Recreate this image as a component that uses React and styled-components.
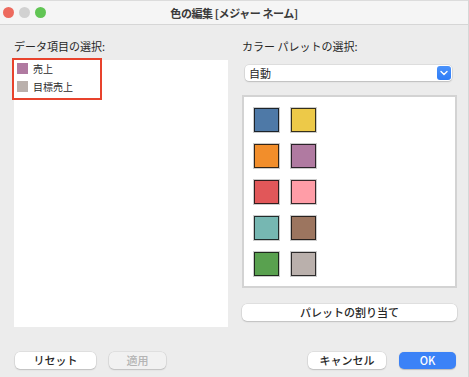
import React from 'react';
import styled, { createGlobalStyle } from 'styled-components';

const GlobalStyle = createGlobalStyle`
  html, body {
    margin: 0;
    padding: 0;
    background: #ececec;
  }
  body {
    font-family: "Noto Sans CJK JP", "Noto Sans", "Liberation Sans", sans-serif;
    color: #262626;
  }
`;

const palette = [
  '#4e79a7', '#edc948',
  '#f28e2b', '#b07aa1',
  '#e15759', '#ff9da7',
  '#76b7b2', '#9c755f',
  '#59a14f', '#bab0ac',
];

const items = [
  { name: '売上', color: '#b07aa1' },
  { name: '目標売上', color: '#bab0ac' },
];

export default function App() {
  return (
    <>
      <GlobalStyle />
      <Window>
        <TitleBar>
          <Lights>
            <Light color="#ed6a5e" />
            <Light color="#d1d1d1" />
            <Light color="#61c554" />
          </Lights>
          <Title>色の編集 [メジャー ネーム]</Title>
        </TitleBar>

        <Body>
          <Columns>
            <Column>
              <Label>データ項目の選択:</Label>
              <ListBox>
                <Highlight>
                  {items.map((it) => (
                    <Item key={it.name}>
                      <ItemSwatch color={it.color} />
                      <span>{it.name}</span>
                    </Item>
                  ))}
                </Highlight>
              </ListBox>
            </Column>

            <Column>
              <Label>カラー パレットの選択:</Label>
              <Select>
                <span>自動</span>
                <SelectArrow>
                  <svg width="8" height="6" viewBox="0 0 8 6">
                    <path d="M1 1.5 L4 4.5 L7 1.5" fill="none" stroke="#fff" strokeWidth="1.4" strokeLinecap="round" strokeLinejoin="round" />
                  </svg>
                </SelectArrow>
              </Select>
              <PaletteBox>
                <SwatchGrid>
                  {palette.map((c) => (
                    <Swatch key={c} color={c} />
                  ))}
                </SwatchGrid>
              </PaletteBox>
              <Button wide>パレットの割り当て</Button>
            </Column>
          </Columns>

          <Footer>
            <Group>
              <Button w={81}>リセット</Button>
              <Button w={57} disabled>適用</Button>
            </Group>
            <Group>
              <Button w={78}>キャンセル</Button>
              <Button w={57} primary>OK</Button>
            </Group>
          </Footer>
        </Body>
      </Window>
    </>
  );
}

const Window = styled.div`
  width: 469px;
  height: 377px;
  background: #ececec;
  display: flex;
  flex-direction: column;
  overflow: hidden;
  box-sizing: border-box;
  border-right: 1px solid #d6d6d6;
`;

const TitleBar = styled.div`
  position: relative;
  height: 25px;
  flex: none;
  display: flex;
  align-items: center;
  justify-content: center;
  background: #f5f5f5;
  border-top: 1px solid #dcdcdc;
  border-bottom: 1px solid #d6d6d6;
  box-sizing: border-box;
`;

const Lights = styled.div`
  position: absolute;
  left: 3px;
  top: 6px;
  display: flex;
  gap: 5px;
`;

const Light = styled.span`
  width: 11px;
  height: 11px;
  border-radius: 50%;
  background: ${(p) => p.color};
`;

const Title = styled.div`
  font-size: 11px;
  font-weight: 700;
  color: #3a3a3a;
  letter-spacing: -0.4px;
`;

const Body = styled.div`
  flex: 1;
  display: flex;
  flex-direction: column;
  padding: 14px 12px 0 14px;
`;

const Columns = styled.div`
  display: grid;
  grid-template-columns: 214px 215px;
  column-gap: 14px;
  height: 288px;
`;

const Column = styled.div`
  display: flex;
  flex-direction: column;
`;

const Label = styled.div`
  height: 14px;
  line-height: 14px;
  font-size: 11px;
  color: #262626;
`;

const ListBox = styled.div`
  margin-top: 7px;
  flex: 1;
  background: #fff;
`;

const Highlight = styled.div`
  width: 83px;
  height: 35px;
  margin: -2px 0 0 -2px;
  border: 2px solid #e8432d;
  padding: 3px 0 0 3px;
  display: flex;
  flex-direction: column;
  gap: 7px;
`;

const Item = styled.div`
  display: flex;
  align-items: center;
  gap: 5px;
  height: 11px;
  font-size: 10px;
  color: #2a2a2a;
`;

const ItemSwatch = styled.span`
  width: 11px;
  height: 11px;
  background: ${(p) => p.color};
`;

const Select = styled.div`
  margin: 12px 5px 0 3px;
  height: 16px;
  background: #fff;
  border-radius: 4px;
  box-shadow: 0 0 0 0.5px rgba(0, 0, 0, 0.12), 0 1px 1.5px rgba(0, 0, 0, 0.15);
  display: flex;
  align-items: center;
  justify-content: space-between;
  padding: 0 1px 0 4px;
  font-size: 11px;
  color: #262626;
`;

const SelectArrow = styled.span`
  width: 14px;
  height: 14px;
  border-radius: 3px;
  background: linear-gradient(#4a92fb, #2f7cf6);
  display: flex;
  align-items: center;
  justify-content: center;
`;

const PaletteBox = styled.div`
  margin-top: 14px;
  height: 193px;
  box-sizing: border-box;
  background: #fff;
  border: 2px solid #d3d3d3;
  padding: 11px 0 0 10px;
`;

const SwatchGrid = styled.div`
  display: grid;
  grid-template-columns: repeat(2, 25px);
  grid-auto-rows: 24px;
  column-gap: 12px;
  row-gap: 12px;
`;

const Swatch = styled.span`
  box-sizing: border-box;
  background: ${(p) => p.color};
  border: 1px solid rgba(20, 20, 20, 0.85);
  box-shadow: 0 0 0 1px rgba(0, 0, 0, 0.2);
`;

const Button = styled.button`
  box-sizing: border-box;
  height: 17px;
  width: ${(p) => (p.wide ? 'auto' : `${p.w}px`)};
  margin-top: ${(p) => (p.wide ? '16px' : '0')};
  padding: 0;
  border: none;
  border-radius: 5px;
  font-family: inherit;
  font-size: 11px;
  font-weight: 500;
  line-height: 17px;
  color: ${(p) => (p.primary ? '#fff' : p.disabled ? '#b4b4b4' : '#262626')};
  background: ${(p) => (p.primary ? '#3b82f7' : p.disabled ? '#f1f1f1' : '#fff')};
  box-shadow: ${(p) =>
    p.primary
      ? '0 0.5px 1px rgba(0,0,0,0.2)'
      : '0 0 0 0.5px rgba(0,0,0,0.1), 0 1px 1.5px rgba(0,0,0,0.15)'};
`;

const Footer = styled.div`
  margin-top: 25px;
  display: flex;
  justify-content: space-between;
  padding-left: 1px;
`;

const Group = styled.div`
  display: flex;
  gap: 13px;
`;
